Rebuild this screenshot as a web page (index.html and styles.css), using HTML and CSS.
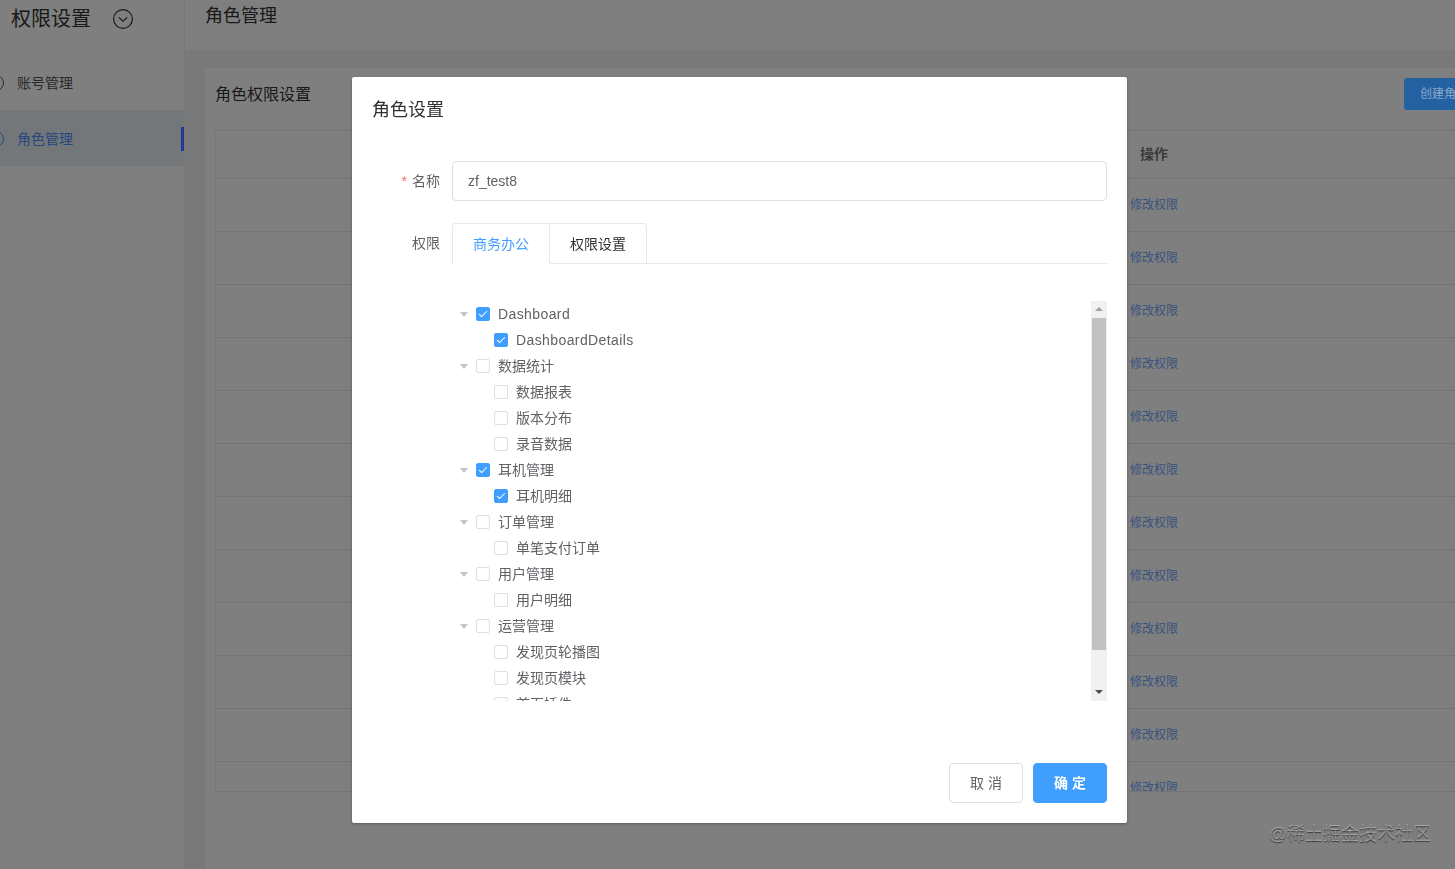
FILE: index.html
```html
<!DOCTYPE html>
<html lang="zh-CN">
  <head>
    <meta charset="UTF-8" />
    <meta name="viewport" content="width=device-width, initial-scale=1.0" />
    <title>角色管理</title>
    <link rel="stylesheet" href="styles.css">
  </head>
  <body>
    <div class="layout">
      <aside class="sidebar">
        <div class="sidebar-title">
          <span>权限设置</span>
          <svg class="title-icon" width="22" height="22" viewBox="0 0 22 22" fill="none" stroke="#333" stroke-width="1.2">
            <circle cx="11" cy="11" r="9.4" />
            <path d="M6.8 9.4 11 13.2l4.2-3.8" />
          </svg>
        </div>
        <a class="menu-item">
          <svg class="menu-icon" width="18" height="18" viewBox="0 0 18 18" fill="none" stroke="currentColor" stroke-width="1">
            <circle cx="9" cy="9" r="7.5" />
            <path d="M9 5v4.5" />
          </svg>
          <span>账号管理</span>
        </a>
        <a class="menu-item active">
          <svg class="menu-icon" width="18" height="18" viewBox="0 0 18 18" fill="none" stroke="currentColor" stroke-width="1">
            <circle cx="9" cy="9" r="7.5" />
            <path d="M9 5v4.5" />
          </svg>
          <span>角色管理</span>
          <i class="menu-bar"></i>
        </a>
      </aside>

      <main class="main">
        <header class="page-header">角色管理</header>
        <section class="card">
          <div class="card-head">
            <h2 class="card-title">角色权限设置</h2>
            <button class="create-btn">创建角色</button>
          </div>
          <div class="table">
            <div class="table-row table-head"><span></span><span class="head-cell">操作</span></div>
            <div class="table-row"><span></span><a class="row-link">修改权限</a></div>
            <div class="table-row"><span></span><a class="row-link">修改权限</a></div>
            <div class="table-row"><span></span><a class="row-link">修改权限</a></div>
            <div class="table-row"><span></span><a class="row-link">修改权限</a></div>
            <div class="table-row"><span></span><a class="row-link">修改权限</a></div>
            <div class="table-row"><span></span><a class="row-link">修改权限</a></div>
            <div class="table-row"><span></span><a class="row-link">修改权限</a></div>
            <div class="table-row"><span></span><a class="row-link">修改权限</a></div>
            <div class="table-row"><span></span><a class="row-link">修改权限</a></div>
            <div class="table-row"><span></span><a class="row-link">修改权限</a></div>
            <div class="table-row"><span></span><a class="row-link">修改权限</a></div>
            <div class="table-row"><span></span><a class="row-link">修改权限</a></div>
          </div>
        </section>
      </main>
    </div>

    <div class="overlay">
      <div class="dialog">
        <h3 class="dialog-title">角色设置</h3>

        <div class="form-row name-row">
          <label class="form-label"><em>*</em>名称</label>
          <input class="form-input" type="text" value="zf_test8" />
        </div>

        <div class="form-row">
          <label class="form-label">权限</label>
          <div class="form-body">
            <div class="tabs">
              <div class="tab active">商务办公</div>
              <div class="tab">权限设置</div>
            </div>

            <div class="tree-wrap">
              <ul class="tree">
                <li class="node latin"><i class="caret"></i><i class="check on"></i>Dashboard</li>
                <li class="node child latin"><i class="check on"></i>DashboardDetails</li>
                <li class="node"><i class="caret"></i><i class="check"></i>数据统计</li>
                <li class="node child"><i class="check"></i>数据报表</li>
                <li class="node child"><i class="check"></i>版本分布</li>
                <li class="node child"><i class="check"></i>录音数据</li>
                <li class="node"><i class="caret"></i><i class="check on"></i>耳机管理</li>
                <li class="node child"><i class="check on"></i>耳机明细</li>
                <li class="node"><i class="caret"></i><i class="check"></i>订单管理</li>
                <li class="node child"><i class="check"></i>单笔支付订单</li>
                <li class="node"><i class="caret"></i><i class="check"></i>用户管理</li>
                <li class="node child"><i class="check"></i>用户明细</li>
                <li class="node"><i class="caret"></i><i class="check"></i>运营管理</li>
                <li class="node child"><i class="check"></i>发现页轮播图</li>
                <li class="node child"><i class="check"></i>发现页模块</li>
                <li class="node child"><i class="check"></i>首页插件</li>
              </ul>
              <div class="scrollbar">
                <i class="arrow-up"></i>
                <div class="thumb"></div>
                <i class="arrow-down"></i>
              </div>
            </div>
          </div>
        </div>

        <div class="dialog-footer">
          <button class="btn">取 消</button>
          <button class="btn primary">确 定</button>
        </div>
      </div>
    </div>

    <div class="watermark">@稀土掘金技术社区</div>
  </body>
</html>
```

FILE: styles.css
```css
* {
  margin: 0;
  padding: 0;
  box-sizing: border-box;
}

body {
  height: 100vh;
  overflow: hidden;
  font-family: "Liberation Sans", "Noto Sans CJK SC", sans-serif;
  font-size: 14px;
  color: #333;
  background-color: #f2f2f2;
}

ul {
  list-style: none;
}

i {
  font-style: normal;
}

/* page under the dialog */
.layout {
  display: flex;
  height: 100%;
}

.sidebar {
  flex: none;
  width: 185px;
  background-color: #fff;
  border-right: 1px solid #eee;
}

.sidebar-title {
  display: flex;
  align-items: center;
  height: 54px;
  padding: 0 0 16px 11px;
  font-size: 20px;
  line-height: 28px;
  color: #333;
}

.title-icon {
  margin-left: 21px;
}

.menu-item {
  display: flex;
  align-items: center;
  height: 56px;
  padding-top: 1px;
  color: #555;
  line-height: 20px;
}

.menu-item span {
  margin-left: 12px;
}

.menu-icon {
  margin-left: -13px;
}

.menu-item.active {
  color: #4f8cff;
  background-color: #e8eef3;
}

.menu-bar {
  position: relative;
  z-index: 2;
  width: 3px;
  height: 24px;
  margin-left: auto;
  background-color: #20399a;
}

.main {
  flex: 1;
  display: flex;
  flex-direction: column;
  min-width: 0;
  overflow: hidden;
}

.page-header {
  flex: none;
  height: 50px;
  padding-left: 20px;
  padding-bottom: 18px;
  font-size: 18px;
  line-height: 33px;
  background-color: #fff;
}

.card {
  flex: 1;
  width: 1299px;
  margin: 18px 0 0 20px;
  padding: 10px 10px 0;
  background-color: #fff;
}

.card-head {
  display: flex;
  justify-content: space-between;
  align-items: center;
  height: 32px;
  margin-bottom: 20px;
}

.card-title {
  padding-top: 2px;
  font-size: 16px;
  font-weight: normal;
  line-height: 22px;
}

.create-btn {
  position: relative;
  z-index: 2;
  width: 90px;
  height: 32px;
  padding: 0 0 3px 16px;
  text-align: left;
  border: 0;
  border-radius: 3px;
  font-family: inherit;
  font-size: 12px;
  color: #8aa8c8;
  background-color: #2461a3;
}

.table {
  height: 662px;
  overflow: hidden;
  border-top: 1px solid #e9e9e9;
  border-left: 1px solid #efefef;
  border-bottom: 1px solid #e9e9e9;
}

.table-row {
  display: grid;
  grid-template-columns: 914px 1fr;
  align-items: center;
  height: 53px;
  border-bottom: 1px solid #e9e9e9;
  line-height: 18px;
}

.table-head {
  height: 48px;
  padding-bottom: 2px;
}

.head-cell {
  padding-left: 10px;
  font-weight: bold;
  color: #777;
}

.row-link {
  font-size: 12px;
  color: #6fa8ff;
}

/* dialog */
.overlay {
  position: fixed;
  inset: 0;
  z-index: 1;
  padding: 77px 0 0 352px;
  background-color: rgba(0, 0, 0, 0.5);
}

.dialog {
  display: flex;
  flex-direction: column;
  width: 775px;
  height: 746px;
  padding: 20px 20px 20px;
  border-radius: 2px;
  background-color: #fff;
  box-shadow: 0 1px 3px rgba(0, 0, 0, 0.3);
}

.dialog-title {
  height: 24px;
  margin-bottom: 40px;
  padding-top: 1px;
  font-size: 18px;
  font-weight: normal;
  line-height: 24px;
  color: #303133;
}

.form-row {
  display: flex;
}

.name-row {
  margin-bottom: 22px;
}

.form-label {
  flex: none;
  width: 80px;
  padding-right: 12px;
  text-align: right;
  line-height: 40px;
  color: #606266;
}

.form-label em {
  margin-right: 5px;
  font-style: normal;
  color: #f56c6c;
}

.form-input {
  flex: 1;
  height: 40px;
  padding: 0 15px;
  border: 1px solid #dcdfe6;
  border-radius: 4px;
  font-family: inherit;
  font-size: 14px;
  color: #606266;
}

.form-body {
  flex: 1;
  min-width: 0;
}

.tabs {
  display: flex;
  height: 41px;
  border-bottom: 1px solid #e4e7ed;
}

.tab {
  height: 41px;
  padding: 0 20px;
  line-height: 41px;
  color: #303133;
  border: 1px solid #e4e7ed;
  border-left: 0;
  border-radius: 0 4px 0 0;
}

.tab.active {
  color: #409eff;
  border-left: 1px solid #e4e7ed;
  border-bottom-color: #fff;
  border-radius: 4px 0 0 0;
}

.tree-wrap {
  display: flex;
  height: 400px;
  margin-top: 37px;
}

.tree {
  flex: 1;
  overflow: hidden;
}

.node {
  display: flex;
  align-items: center;
  height: 26px;
  font-size: 14px;
  line-height: 18px;
  color: #606266;
}

.node.latin {
  letter-spacing: 0.4px;
}

.node.child {
  padding-left: 42px;
}

.caret {
  width: 0;
  height: 0;
  margin: 1px 8px 0 8px;
  border-top: 5px solid #c0c4cc;
  border-left: 4px solid transparent;
  border-right: 4px solid transparent;
}

.check {
  flex: none;
  position: relative;
  width: 14px;
  height: 14px;
  margin-right: 8px;
  border: 1px solid #dcdfe6;
  border-radius: 2px;
  background-color: #fff;
}

.check.on {
  border-color: #409eff;
  background-color: #409eff;
}

.check.on::after {
  content: "";
  position: absolute;
  left: 4px;
  top: 1px;
  width: 3px;
  height: 7px;
  border: 1px solid #fff;
  border-top: 0;
  border-left: 0;
  transform: rotate(45deg);
}

.scrollbar {
  flex: none;
  display: flex;
  flex-direction: column;
  align-items: center;
  width: 16px;
  background-color: #f1f1f1;
}

.arrow-up {
  margin-top: 6px;
  border-bottom: 4px solid #a3a3a3;
  border-left: 4px solid transparent;
  border-right: 4px solid transparent;
}

.thumb {
  width: 14px;
  height: 332px;
  margin-top: 7px;
  background-color: #c1c1c1;
}

.arrow-down {
  margin-top: 40px;
  border-top: 4px solid #505050;
  border-left: 4px solid transparent;
  border-right: 4px solid transparent;
}

.dialog-footer {
  display: flex;
  justify-content: flex-end;
  gap: 10px;
  margin-top: auto;
}

.btn {
  width: 74px;
  height: 40px;
  padding-bottom: 2px;
  border: 1px solid #dcdfe6;
  border-radius: 4px;
  font-family: inherit;
  font-size: 14px;
  color: #606266;
  background-color: #fff;
}

.btn.primary {
  font-weight: 700;
  color: #fff;
  border-color: #409eff;
  background-color: #409eff;
}

.watermark {
  position: fixed;
  z-index: 3;
  right: 24px;
  bottom: 23px;
  font-size: 18px;
  line-height: 24px;
  color: rgba(255, 255, 255, 0.33);
  text-shadow: 0 1px 1px rgba(0, 0, 0, 0.55);
}
```
